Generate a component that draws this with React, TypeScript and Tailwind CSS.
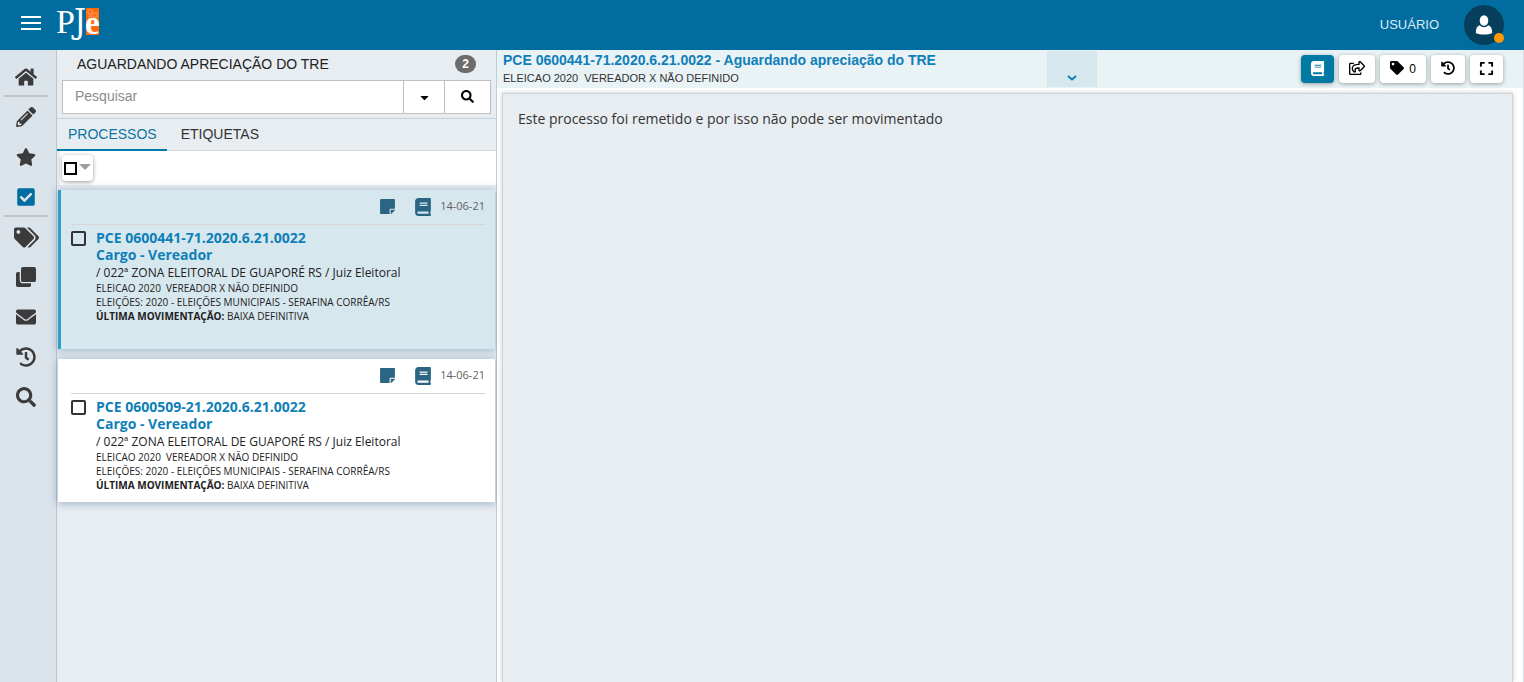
import { useState } from "react";
import type { ReactNode } from "react";
import {
  FaBook,
  FaCaretDown,
  FaCheckSquare,
  FaClone,
  FaEnvelope,
  FaExpand,
  FaHistory,
  FaHome,
  FaPencilAlt,
  FaRegShareSquare,
  FaSearch,
  FaStar,
  FaStickyNote,
  FaTag,
  FaTags,
} from "react-icons/fa";

type Processo = {
  id: string;
  numero: string;
  cargo: string;
  orgao: string;
  partes: string[];
  eleicoes: string;
  ultimaMovimentacao: string;
  data: string;
};

type RailItem = {
  label: string;
  icon: ReactNode;
  active?: boolean;
  divider?: boolean;
};

const RAIL_ITEMS: RailItem[] = [
  { label: "Início", icon: <FaHome size={22} />, divider: true },
  { label: "Editar", icon: <FaPencilAlt size={20} /> },
  { label: "Favoritos", icon: <FaStar size={20} /> },
  { label: "Tarefas", icon: <FaCheckSquare size={20} />, active: true, divider: true },
  { label: "Etiquetas", icon: <FaTags size={25} /> },
  { label: "Documentos", icon: <FaClone size={20} /> },
  { label: "Mensagens", icon: <FaEnvelope size={20} /> },
  { label: "Histórico", icon: <FaHistory size={20} /> },
  { label: "Consultar", icon: <FaSearch size={20} /> },
];

const PROCESSOS: Processo[] = [
  {
    id: "441",
    numero: "PCE 0600441-71.2020.6.21.0022",
    cargo: "Cargo - Vereador",
    orgao: "/ 022ª ZONA ELEITORAL DE GUAPORÉ RS / Juiz Eleitoral",
    partes: ["ELEICAO 2020", "VEREADOR X NÃO DEFINIDO"],
    eleicoes: "ELEIÇÕES: 2020 - ELEIÇÕES MUNICIPAIS - SERAFINA CORRÊA/RS",
    ultimaMovimentacao: "BAIXA DEFINITIVA",
    data: "14-06-21",
  },
  {
    id: "509",
    numero: "PCE 0600509-21.2020.6.21.0022",
    cargo: "Cargo - Vereador",
    orgao: "/ 022ª ZONA ELEITORAL DE GUAPORÉ RS / Juiz Eleitoral",
    partes: ["ELEICAO 2020", "VEREADOR X NÃO DEFINIDO"],
    eleicoes: "ELEIÇÕES: 2020 - ELEIÇÕES MUNICIPAIS - SERAFINA CORRÊA/RS",
    ultimaMovimentacao: "BAIXA DEFINITIVA",
    data: "14-06-21",
  },
];

function Logo() {
  return (
    <svg className="overflow-visible" width="46" height="50" viewBox="0 0 46 50" role="img" aria-label="PJe">
      <rect x="30" y="8" width="13" height="27" fill="#ff6a0d" />
      <path d="M32 10h4v4h-4zM37 13h4v4h-4zM33 16h3v3h-3z" fill="none" stroke="#ff9a5a" />
      <g fill="#fff">
        <text x="0" y="33" fontFamily="Liberation Serif, serif" fontSize="34">P</text>
        <text x="18" y="33" fontFamily="DejaVu Serif Condensed, DejaVu Serif, serif" fontSize="33">J</text>
        <text x="29" y="34" fontFamily="Liberation Serif, serif" fontSize="33" fontWeight="700">e</text>
      </g>
    </svg>
  );
}

function UserIcon() {
  return (
    <svg width="18" height="20" viewBox="0 0 18 20" fill="currentColor" aria-hidden="true">
      <ellipse cx="9" cy="5.500" rx="4.300" ry="5.300" />
      <path d="M4.600 10.200C5.800 11.500 7.300 12.200 9 12.200s3.200-.7 4.400-2c2.700.8 3.800 3.600 3.800 7.800-4 2-12.400 2-16.400 0 0-4.200 1.100-7 3.800-7.800z" />
    </svg>
  );
}

function TopBar() {
  return (
    <header className="flex h-[50px] shrink-0 items-center bg-[#006ca0] pl-[21px] pr-5 text-white">
      <button aria-label="Menu" className="mb-1 flex w-5 flex-col gap-1">
        <span className="h-0.5 w-full bg-white" />
        <span className="h-0.5 w-full bg-white" />
        <span className="h-0.5 w-full bg-white" />
      </button>
      <a href="#" className="ml-[15px]">
        <Logo />
      </a>
      <span className="ml-auto text-[13px] text-[#dcebf3]">USUÁRIO</span>
      <button
        aria-label="Perfil do usuário"
        className="relative ml-[25px] flex h-10 w-10 items-center justify-center rounded-full bg-[#053f5c]"
      >
        <UserIcon />
        <span className="absolute bottom-0.5 right-0 h-2.5 w-2.5 rounded-full bg-[#ff9800]" />
      </button>
    </header>
  );
}

function SideRail() {
  return (
    <nav className="w-[57px] shrink-0 border-r border-[#bfc4c8] bg-[#dbe3eb] pl-1 pr-2 pt-[7px]">
      {RAIL_ITEMS.map((item) => (
        <button
          key={item.label}
          aria-label={item.label}
          className={`flex h-10 w-full items-center justify-center border-b-2 pt-0.5 ${
            item.divider ? "border-[#c4c4c4]" : "border-transparent"
          } ${item.active ? "text-[#006ca0]" : "text-[#3b3b3b]"}`}
        >
          {item.icon}
        </button>
      ))}
    </nav>
  );
}

type ProcessoCardProps = {
  processo: Processo;
  selected: boolean;
  onSelect: () => void;
};

function ProcessoCard({ processo, selected, onSelect }: ProcessoCardProps) {
  return (
    <article
      className={`pr-2.5 pt-[5px] font-['Open_Sans','Noto_Sans',sans-serif] text-[#212121] shadow-[0_1px_8px_1px_rgba(60,110,145,0.4)] ${
        selected ? "border-l-[3px] border-[#29a0c8] bg-[#d7e7ee] pb-[26px] pl-2.5" : "bg-white pb-2.5 pl-[13px]"
      }`}
    >
      <div className="flex h-[30px] items-center justify-end border-b border-[#d6d6d6] pb-1.5 text-[#2b6584]">
        <FaStickyNote size={17} className="mr-[18px]" />
        <FaBook size={18} className="mr-2" />
        <time className="text-[11px] text-[#616161]">{processo.data}</time>
      </div>
      <div className="flex pt-1">
        <input
          type="checkbox"
          aria-label={`Selecionar ${processo.numero}`}
          className="mr-2.5 mt-0.5 h-[15px] w-[15px] shrink-0 appearance-none rounded-xs border-2 border-[#333] checked:bg-[#333]"
        />
        <div className="min-w-0 text-[10px] leading-[14px]">
          <a href="#" onClick={onSelect} className="block text-sm font-bold leading-[17px] text-[#0f7fb9]">
            {processo.numero}
            <br />
            {processo.cargo}
          </a>
          <p className="mt-px text-xs leading-[17px]">{processo.orgao}</p>
          <p className="flex gap-[5px]">
            {processo.partes.map((parte) => (
              <span key={parte}>{parte}</span>
            ))}
          </p>
          <p>{processo.eleicoes}</p>
          <p>
            <strong>ÚLTIMA MOVIMENTAÇÃO:</strong> {processo.ultimaMovimentacao}
          </p>
        </div>
      </div>
    </article>
  );
}

type TaskListProps = {
  selectedId: string;
  onSelect: (id: string) => void;
};

function TaskList({ selectedId, onSelect }: TaskListProps) {
  return (
    <section className="flex w-[440px] shrink-0 flex-col border-r border-[#bccdd7] bg-[#e8edf1]">
      <div className="flex h-[30px] items-center justify-between px-5 pb-0.5">
        <h1 className="text-sm text-[#212121]">AGUARDANDO APRECIAÇÃO DO TRE</h1>
        <span className="flex h-[18px] w-[21px] items-center justify-center rounded-full bg-[#6c6c6c] text-xs font-bold text-white">
          2
        </span>
      </div>

      <div className="border-b border-[#c5d2da] px-[5px] pb-1">
        <form className="flex h-[34px]" onSubmit={(e) => e.preventDefault()}>
          <input
            type="text"
            aria-label="Pesquisar"
            placeholder="Pesquisar"
            className="min-w-0 flex-1 border border-[#bfbfbf] bg-white px-3 pb-0.5 text-sm placeholder:text-[#8c8c8c] focus:outline-none"
          />
          <button
            type="button"
            aria-label="Mais filtros"
            className="flex w-10 items-center justify-center border-y border-[#bfbfbf] bg-white text-black"
          >
            <FaCaretDown size={13} />
          </button>
          <button
            type="submit"
            aria-label="Buscar"
            className="flex w-[47px] items-center justify-center border border-[#bfbfbf] bg-white pb-0.5 text-black"
          >
            <FaSearch size={13} />
          </button>
        </form>
      </div>

      <div className="flex h-8 border-b border-[#d0d8de] text-sm text-[#333]" role="tablist">
        <button
          role="tab"
          aria-selected="true"
          className="-mb-px border-b-2 border-[#007aa8] pl-[11px] pr-2.5 text-[#0b75a3]"
        >
          PROCESSOS
        </button>
        <button role="tab" aria-selected="false" className="px-3.5 pb-0.5">
          ETIQUETAS
        </button>
      </div>

      <div className="ml-[3px] bg-white pb-1 pl-0.5 pt-1">
        <div className="flex h-[26px] w-[31px] items-center rounded-sm bg-white pl-0.5 shadow-[0_1px_4px_rgba(0,0,0,0.4)]">
          <input
            type="checkbox"
            aria-label="Selecionar todos"
            className="h-[13px] w-[13px] shrink-0 appearance-none border-2 border-black checked:bg-black"
          />
          <button aria-label="Opções de seleção" className="mb-0.5 ml-0.5 text-[#9e9e9e]">
            <svg width="12" height="6" viewBox="0 0 12 6" aria-hidden="true">
              <path d="M0 0h12L6 6z" fill="currentColor" />
            </svg>
          </button>
        </div>
      </div>

      <div className="mx-px mt-[5px] flex flex-col gap-2.5">
        {PROCESSOS.map((processo) => (
          <ProcessoCard
            key={processo.id}
            processo={processo}
            selected={processo.id === selectedId}
            onSelect={() => onSelect(processo.id)}
          />
        ))}
      </div>
    </section>
  );
}

const TOOL_BUTTON = "flex h-7 items-center justify-center rounded-sm shadow-[0_1px_4px_rgba(0,0,0,0.35)]";

function TaskDetail({ processo }: { processo: Processo }) {
  return (
    <main className="flex min-w-0 flex-1 flex-col border-r border-[#d5dde2] bg-white">
      <div className="flex h-[38px] shrink-0 bg-[#e9f2f5] pl-1.5">
        <div className="min-w-0 flex-[544]">
          <h2 className="truncate text-sm font-bold leading-5 text-[#0f7fb9]">
            {processo.numero} - Aguardando apreciação do TRE
          </h2>
          <p className="flex gap-1.5 text-[11px] leading-4 text-[#333]">
            {processo.partes.map((parte) => (
              <span key={parte}>{parte}</span>
            ))}
          </p>
        </div>
        <button
          aria-label="Mais detalhes"
          className="mb-px mt-px flex w-[50px] items-end justify-center bg-[#d6e7ee] pb-[5px] text-[#0f7fb9]"
        >
          <svg width="10" height="8" viewBox="0 0 10 8" fill="none" stroke="currentColor" strokeWidth="2" aria-hidden="true">
            <path d="M1 2l4 3.500L9 2" />
          </svg>
        </button>
        <div className="flex flex-[406] items-center justify-end gap-[5px] pr-5 text-black">
          <button aria-label="Autos" className={`${TOOL_BUTTON} w-[33px] bg-[#007aa5] pb-0.5 text-white`}>
            <FaBook size={15} />
          </button>
          <button aria-label="Encaminhar" className={`${TOOL_BUTTON} w-9 bg-white pb-0.5`}>
            <FaRegShareSquare size={16} />
          </button>
          <button aria-label="Etiquetas" className={`${TOOL_BUTTON} w-[46px] gap-[5px] bg-white text-xs`}>
            <FaTag size={14} className="mb-0.5" />0
          </button>
          <button aria-label="Histórico" className={`${TOOL_BUTTON} w-[34px] bg-white pb-0.5`}>
            <FaHistory size={14} />
          </button>
          <button aria-label="Tela cheia" className={`${TOOL_BUTTON} w-[33px] bg-white pb-0.5`}>
            <FaExpand size={15} />
          </button>
        </div>
      </div>

      <div className="ml-[5px] mr-2.5 mt-[5px] flex-1 border border-b-0 border-[#cfd3d6] bg-[#e8edf1] px-[15px] py-3.5 shadow-[0_0_5px_rgba(0,0,0,0.2)]">
        <p className="font-['Open_Sans','Noto_Sans',sans-serif] text-sm leading-[22px] text-[#333]">
          Este processo foi remetido e por isso não pode ser movimentado
        </p>
      </div>
    </main>
  );
}

function App() {
  const [selectedId, setSelectedId] = useState("441");
  const processo = PROCESSOS.find((p) => p.id === selectedId) ?? PROCESSOS[0];

  return (
    <div className="flex h-screen flex-col overflow-hidden font-['Liberation_Sans',Arial,sans-serif]">
      <TopBar />
      <div className="flex min-h-0 flex-1">
        <SideRail />
        <TaskList selectedId={selectedId} onSelect={setSelectedId} />
        <TaskDetail processo={processo} />
      </div>
    </div>
  );
}

export default App;
